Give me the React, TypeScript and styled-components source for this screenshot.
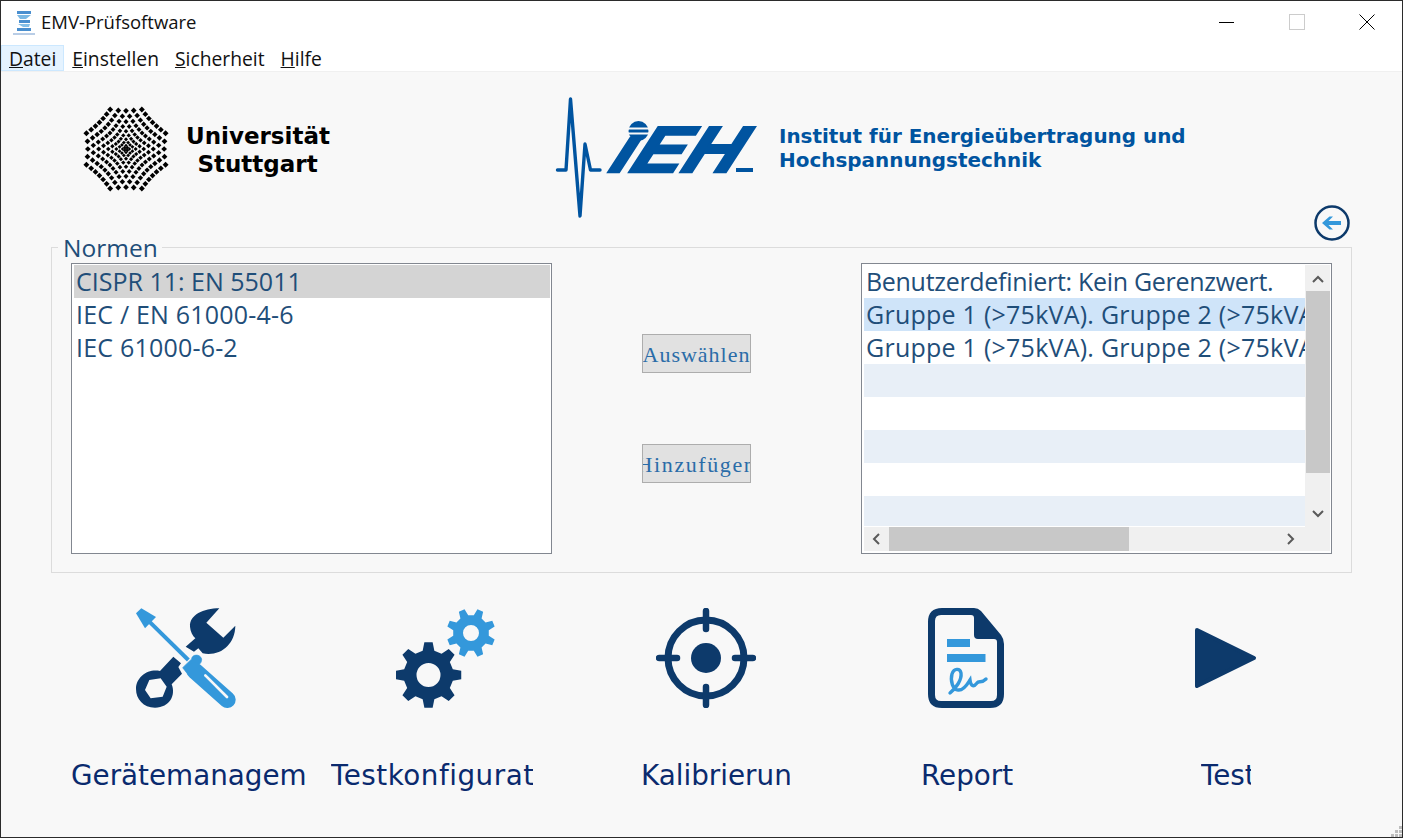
import React from "react";
import styled, { createGlobalStyle } from "styled-components";

const Global = createGlobalStyle`
  html, body { margin: 0; padding: 0; background: #f8f8f8; overflow: hidden; }
  * { box-sizing: border-box; }
`;

const UI = `"Open Sans", "Noto Sans", sans-serif`;
const DARK = "#0d3a6b";
const LIGHT = "#3498db";
const IEH = "#0054a0";

const Window = styled.div`
  width: 1403px; height: 838px; border: 1px solid #2b2b2b; background: #f8f8f8;
  display: flex; flex-direction: column; position: relative; overflow: hidden;
`;
const TitleBar = styled.div`
  height: 43px; background: #fff; display: flex; align-items: center; padding-left: 10px; flex: none;
`;
const TitleText = styled.div`
  font: 400 18.5px ${UI}; color: #111; margin-left: 4px; flex: 1; margin-top: -3px;
`;
const WinButton = styled.div`
  width: 70px; height: 43px; display: flex; align-items: center; justify-content: center; margin-top: -1px;
`;
const MenuBar = styled.div`
  height: 28px; background: #fff; display: flex; flex: none; border-bottom: 1px solid #f0f0f0;
`;
const MenuItem = styled.div<{ $active?: boolean }>`
  height: 26px; margin-top: 1px; padding: 1px 7px 0 7px; display: flex; align-items: center;
  font: 400 19.3px ${UI}; color: #111;
  background: ${p => (p.$active ? "#e5f3ff" : "transparent")};
  border: 1px solid ${p => (p.$active ? "#cce8ff" : "transparent")};
`;
const HeaderRow = styled.div`
  height: 133px; flex: none; display: flex; align-items: flex-start;
`;
const UniBlock = styled.div`
  display: flex; margin: 33px 0 0 82px; width: 469px;
`;
const UniText = styled.div`
  font: 700 23px/28px "DejaVu Sans", sans-serif; color: #000; text-align: center; margin: 17px 0 0 17px; width: 143px; white-space: nowrap;
`;
const IehLogo = styled.svg`
  margin-top: 23px; flex: none; display: block;
`;
const IehText = styled.div`
  font: 700 19.95px/24px "DejaVu Sans", sans-serif; color: ${IEH}; margin: 52px 0 0 17px; white-space: nowrap;
`;
const BackRow = styled.div`
  height: 42px; flex: none; display: flex; justify-content: flex-end; padding-right: 52px;
`;
const Group = styled.div`
  height: 326px; width: 1301px; margin-left: 50px; flex: none; border: 1px solid #dcdcdc; position: relative;
  display: flex; padding: 15px 0 0 19px;
`;
const Legend = styled.div`
  position: absolute; left: 6px; top: -13px; padding: 0 4px 0 5px; background: #f8f8f8;
  font: 400 24.5px/26px ${UI}; color: #1f4e79;
`;
const ListBox = styled.div`
  width: 481px; height: 291px; background: #fff; border: 1px solid #828790; padding: 1px 1px 0 2px; flex: none;
`;
const ListRow = styled.div<{ $bg?: string; $ls?: number }>`
  height: 33px; padding-left: 2px; font: 400 25px/33px ${UI}; color: #1f4e79;
  letter-spacing: ${p => p.$ls ?? 0}px;
  background: ${p => p.$bg ?? "transparent"}; white-space: nowrap; overflow: hidden;
`;
const ButtonCol = styled.div`
  width: 109px; margin-left: 90px; padding-top: 71px; display: flex; flex-direction: column; gap: 71px; flex: none;
`;
const ActionButton = styled.div<{ $ls: number }>`
  width: 109px; height: 39px; background: #e1e1e1; border: 1px solid #adadad; overflow: hidden; padding-top: 2px;
  display: flex; justify-content: center; align-items: center; white-space: nowrap;
  font: 400 22px "Liberation Serif", serif; color: #2a6ca8; letter-spacing: ${p => p.$ls}px;
`;
const DataList = styled.div`
  width: 471px; height: 291px; margin-left: 110px; background: #fff; border: 1px solid #828790; padding: 1px; flex: none;
  display: grid; grid-template-columns: 442px 25px; grid-template-rows: 262px 24px;
`;
const Rows = styled.div`
  overflow: hidden; padding: 0 0 0 1px; grid-column: 1; grid-row: 1; height: 261px;
`;
const VScroll = styled.div`
  grid-column: 2; grid-row: 1; background: #f0f0f0; display: flex; flex-direction: column; align-items: center;
`;
const ArrowCell = styled.div<{ $h?: number; $w?: number; $pt?: number }>`
  height: ${p => p.$h ?? 24}px; width: ${p => p.$w ?? 25}px; padding-top: ${p => p.$pt ?? 0}px;
  display: flex; align-items: center; justify-content: center; flex: none;
`;
const VThumb = styled.div`
  width: 24px; height: 182px; background: #c8c8c8; flex: none;
`;
const Spacer = styled.div`flex: 1;`;
const HScroll = styled.div`
  grid-column: 1 / span 2; grid-row: 2; background: #f0f0f0; display: flex; align-items: center; height: 24px; margin-left: 1px;
`;
const HThumb = styled.div`
  width: 240px; height: 24px; background: #c8c8c8; flex: none;
`;
const IconsRow = styled.div`
  display: flex; margin-top: 35px; flex: none; height: 100px; padding-left: 55px;
`;
const IconCell = styled.div`
  width: 260px; flex: none; display: flex; justify-content: center;
`;
const LabelsRow = styled.div`
  display: flex; flex: none; margin-top: 48px; height: 40px; padding-left: 70px;
`;
const BottomLabel = styled.div<{ $w: number; $ml: number; $ls?: number }>`
  width: ${p => p.$w}px; margin-left: ${p => p.$ml}px; overflow: hidden; white-space: nowrap; flex: none;
  letter-spacing: ${p => p.$ls ?? 0}px;
  font: 400 27.8px/40px "DejaVu Sans", sans-serif; color: #0a2a6e;
`;
const Grip = styled.svg`
  position: absolute; right: 0; bottom: 0;
`;

function UniLogo() {
  const dots: React.ReactElement[] = [];
  const max = 11;
  for (let a = -10; a <= 10; a++) {
    for (let b = -10; b <= 10; b++) {
      if (Math.abs(a + b) % 2 !== 0) continue;
      const r = Math.hypot(a, b);
      if (r > max) continue;
      const R = r === 0 ? 0 : 44 * Math.pow(r / max, 1.5);
      const x = r === 0 ? 44 : 44 + (a / r) * R;
      const y = r === 0 ? 44 : 44 + (b / r) * R;
      const s = 1.5 + 1.5 * (r / max);
      dots.push(
        <polygon key={`${a}_${b}`} points={`${x},${y - s} ${x + s},${y} ${x},${y + s} ${x - s},${y}`} fill="#000" />
      );
    }
  }
  return <svg width="88" height="88" viewBox="0 0 88 88" style={{ flex: "none", marginLeft: -1, marginRight: -1 }}>{dots}</svg>;
}

function IehMark() {
  return (
    <IehLogo width="210" height="125" viewBox="552 95 210 125">
      <polyline points="557.5,170 566,170 570.5,99 580,216 585,144 590.5,170 600,170" fill="none" stroke={IEH} strokeWidth="3.4" strokeLinejoin="round" strokeLinecap="round" />
      <g transform="translate(603 172) skewX(-33)">
        <text x="0" y="0" fontFamily="'Liberation Sans', sans-serif" fontWeight="700" fontSize="65" fill={IEH} textLength="128" lengthAdjust="spacingAndGlyphs" stroke={IEH} strokeWidth="2.4">ıEH</text>
      </g>
      <rect x="736" y="168" width="17" height="4" fill={IEH} />
      <circle cx="638.5" cy="131" r="10" fill={IEH} />
      <rect x="627" y="127.5" width="23" height="2" fill="#f8f8f8" />
      <rect x="627" y="132.5" width="23" height="2" fill="#f8f8f8" />
    </IehLogo>
  );
}

function AppIcon() {
  return (
    <svg width="26" height="26" viewBox="0 0 26 26" style={{ flex: "none" }}>
      <rect x="6" y="1" width="14" height="3" fill="#4a8fcf" />
      <polygon points="6,5 20,5 15,9 9,9" fill="#7ab8e4" />
      <rect x="8" y="10" width="11" height="3" fill="#4a8fcf" />
      <polygon points="19,14 7,14 12,17 18,17" fill="#86c0e8" />
      <rect x="6" y="18" width="14" height="3" fill="#4a8fcf" />
      <rect x="2" y="23" width="22" height="2" fill="#b9cde6" />
    </svg>
  );
}

function Chevron({ dir }: { dir: "up" | "down" | "left" | "right" }) {
  const pts = {
    up: "1,7 6,2 11,7",
    down: "1,2 6,7 11,2",
    left: "7,1 2,6 7,11",
    right: "2,1 7,6 2,11",
  }[dir];
  const vertical = dir === "up" || dir === "down";
  return (
    <svg width={vertical ? 12 : 9} height={vertical ? 9 : 12} viewBox={vertical ? "0 0 12 9" : "0 0 9 12"}>
      <polyline points={pts} fill="none" stroke="#5a5a5a" strokeWidth="2" />
    </svg>
  );
}

function gearPath(cx: number, cy: number, outer: number, root: number, hole: number, teeth: number, rot: number) {
  const p: string[] = [];
  const step = (Math.PI * 2) / teeth;
  for (let i = 0; i < teeth; i++) {
    const c = rot + i * step - Math.PI / 2;
    const pts: [number, number][] = [
      [root, c - step * 0.3],
      [outer, c - step * 0.16],
      [outer, c + step * 0.16],
      [root, c + step * 0.3],
    ];
    pts.forEach(([r, a]) => p.push(`${(cx + r * Math.cos(a)).toFixed(2)} ${(cy + r * Math.sin(a)).toFixed(2)}`));
  }
  const d = "M" + p.join("L") + "Z";
  return `${d} M${cx - hole} ${cy}a${hole} ${hole} 0 1 0 ${hole * 2} 0a${hole} ${hole} 0 1 0 ${-hole * 2} 0Z`;
}

function ToolsIcon() {
  return (
    <svg width="100" height="100" viewBox="48 39 300 300">
      <path d="M298 40C250 40 208 60 210 95C211 110 218 122 226 130L197 155L222 170L235 160L248 175C300 185 345 150 346 92L310 128L259 83Z" fill={DARK} />
      <path fillRule="evenodd" d="M120 228L160 185L183 205L175 216L186 236L155 268C168 300 150 338 105 338C70 338 48 312 48 282C48 245 85 220 120 228ZM75 285L88 255L122 250L140 275L128 305L92 310Z" fill={DARK} />
      <path d="M48 55L64 40L108 66L75 100Z" fill={LIGHT} />
      <line x1="88" y1="80" x2="205" y2="195" stroke={LIGHT} strokeWidth="12" />
      <path d="M188 218L215 192C215 178 240 175 245 192C245 200 242 205 238 208L205 240Z" fill={LIGHT} stroke={LIGHT} strokeWidth="2" strokeLinejoin="round" />
      <line x1="225" y1="228" x2="322" y2="314" stroke={LIGHT} strokeWidth="50" strokeLinecap="round" />
      <line x1="256" y1="241" x2="321" y2="306" stroke="#f8f8f8" strokeWidth="8" strokeLinecap="round" />
    </svg>
  );
}

function GearsIcon() {
  return (
    <svg width="100" height="100" viewBox="396 608 100 100">
      <path fillRule="evenodd" d={gearPath(428.5, 675, 33, 25, 12, 8, 0)} fill={DARK} />
      <path fillRule="evenodd" d={gearPath(471, 633, 24.5, 18, 8, 8, Math.PI / 8)} fill={LIGHT} />
    </svg>
  );
}

function TargetIcon() {
  return (
    <svg width="100" height="100" viewBox="656 608 100 100">
      <circle cx="706" cy="658" r="38" fill="none" stroke={DARK} strokeWidth="7" />
      <circle cx="706" cy="658" r="15" fill={DARK} />
      <g stroke={DARK} strokeWidth="6.5" strokeLinecap="round">
        <line x1="706" y1="611" x2="706" y2="629" />
        <line x1="706" y1="687" x2="706" y2="705" />
        <line x1="659" y1="658" x2="677" y2="658" />
        <line x1="735" y1="658" x2="753" y2="658" />
      </g>
    </svg>
  );
}

function ReportIcon() {
  return (
    <svg width="76" height="100" viewBox="0 0 76 100">
      <path fillRule="evenodd" fill={DARK} d="M14 0H46Q50 0 53 3L73 27Q76 31 76 36V86Q76 100 62 100H14Q0 100 0 86V14Q0 0 14 0ZM13 7Q7 7 7 13V87Q7 93 13 93H63Q69 93 69 87V34Q69 31 66 31H50Q46 31 46 27V10Q46 7 43 7Z" />
      <rect x="19" y="31" width="23" height="8" fill={LIGHT} />
      <rect x="19" y="46" width="38.5" height="8" fill={LIGHT} />
      <path d="M22 85C28 80 34 72 33 65C32 60 26 60 24 66C22 73 25 82 30 82C36 83 40 75 42 72C43 79 46 79 49 75C51 72 53 76 58 71" fill="none" stroke={LIGHT} strokeWidth="3.4" strokeLinecap="round" />
    </svg>
  );
}

function PlayIcon() {
  return (
    <svg width="100" height="100" viewBox="1176 608 100 100">
      <polygon points="1197,630 1254,658 1197,686" fill={DARK} stroke={DARK} strokeWidth="4" strokeLinejoin="round" />
    </svg>
  );
}

export default function App() {
  return (
    <Window>
      <Global />
      <TitleBar>
        <AppIcon />
        <TitleText>EMV-Prüfsoftware</TitleText>
        <WinButton>
          <svg width="16" height="16"><line x1="0" y1="8.5" x2="15" y2="8.5" stroke="#000" /></svg>
        </WinButton>
        <WinButton>
          <svg width="16" height="16"><rect x="0.5" y="0.5" width="15" height="15" fill="none" stroke="#ccc" /></svg>
        </WinButton>
        <WinButton>
          <svg width="16" height="16"><path d="M0.5 0.5L15.5 15.5M15.5 0.5L0.5 15.5" stroke="#000" /></svg>
        </WinButton>
      </TitleBar>
      <MenuBar>
        <MenuItem $active><u>D</u>atei</MenuItem>
        <MenuItem><u>E</u>instellen</MenuItem>
        <MenuItem><u>S</u>icherheit</MenuItem>
        <MenuItem><u>H</u>ilfe</MenuItem>
      </MenuBar>
      <HeaderRow>
        <UniBlock>
          <UniLogo />
          <UniText>Universität<br />Stuttgart</UniText>
        </UniBlock>
        <IehMark />
        <IehText>Institut für Energieübertragung und<br />Hochspannungstechnik</IehText>
      </HeaderRow>
      <BackRow>
        <svg width="36" height="36" viewBox="0 0 36 36">
          <circle cx="18" cy="18" r="16.5" fill="none" stroke={DARK} strokeWidth="2.5" />
          <path d="M27 16H14.5L19 11.5H15.5L8 18L15.5 24.5H19L14.5 20H27Z" fill={LIGHT} />
        </svg>
      </BackRow>
      <Group>
        <Legend>Normen</Legend>
        <ListBox>
          <ListRow $bg="#d4d4d4">CISPR 11: EN 55011</ListRow>
          <ListRow $ls={0.2}>IEC / EN 61000-4-6</ListRow>
          <ListRow $ls={0.2}>IEC 61000-6-2</ListRow>
        </ListBox>
        <ButtonCol>
          <ActionButton $ls={1}>Auswählen</ActionButton>
          <ActionButton $ls={1.6}>Hinzufügen</ActionButton>
        </ButtonCol>
        <DataList>
          <Rows>
            <ListRow $ls={-0.3}>Benutzerdefiniert: Kein Gerenzwert.</ListRow>
            <ListRow $bg="#cfe4f9" $ls={0.25}>Gruppe 1 (&gt;75kVA). Gruppe 2 (&gt;75kVA)</ListRow>
            <ListRow $ls={0.25}>Gruppe 1 (&gt;75kVA). Gruppe 2 (&gt;75kVA)</ListRow>
            <ListRow $bg="#e8eff7" />
            <ListRow />
            <ListRow $bg="#e8eff7" />
            <ListRow />
            <ListRow $bg="#e8eff7" />
          </Rows>
          <VScroll>
            <ArrowCell $h={26} $pt={2}><Chevron dir="up" /></ArrowCell>
            <VThumb />
            <Spacer />
            <ArrowCell $h={28}><Chevron dir="down" /></ArrowCell>
          </VScroll>
          <HScroll>
            <ArrowCell $w={25}><Chevron dir="left" /></ArrowCell>
            <HThumb />
            <Spacer />
            <ArrowCell $w={25}><Chevron dir="right" /></ArrowCell>
            <ArrowCell $w={27} />
          </HScroll>
        </DataList>
      </Group>
      <IconsRow>
        <IconCell><ToolsIcon /></IconCell>
        <IconCell><GearsIcon /></IconCell>
        <IconCell><TargetIcon /></IconCell>
        <IconCell><ReportIcon /></IconCell>
        <IconCell><PlayIcon /></IconCell>
      </IconsRow>
      <LabelsRow>
        <BottomLabel $w={235} $ml={0}>Gerätemanagement</BottomLabel>
        <BottomLabel $w={202} $ml={25} $ls={0.5}>Testkonfiguration</BottomLabel>
        <BottomLabel $w={149} $ml={108}>Kalibrierung</BottomLabel>
        <BottomLabel $w={92} $ml={131}>Report</BottomLabel>
        <BottomLabel $w={50} $ml={188}>Test</BottomLabel>
      </LabelsRow>
      <Grip width="11" height="11" viewBox="0 0 11 11">
        <g fill="#bdbdbd">
          <rect x="8" y="0" width="3" height="3" />
          <rect x="4" y="4" width="3" height="3" />
          <rect x="8" y="4" width="3" height="3" />
          <rect x="0" y="8" width="3" height="3" />
          <rect x="4" y="8" width="3" height="3" />
          <rect x="8" y="8" width="3" height="3" />
        </g>
      </Grip>
    </Window>
  );
}
